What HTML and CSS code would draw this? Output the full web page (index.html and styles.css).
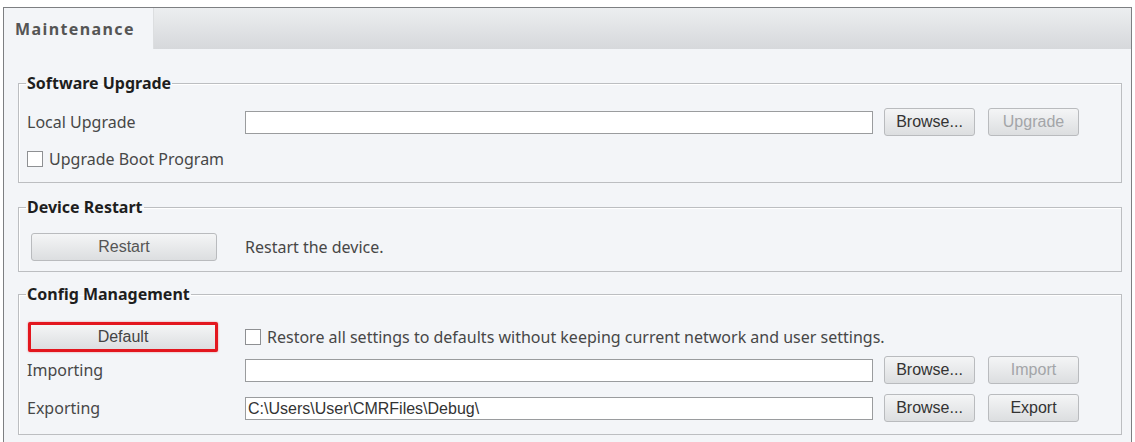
FILE: index.html
```html
<!DOCTYPE html>
<html>
<head>
<meta charset="utf-8">
<title>Maintenance</title>
<link rel="stylesheet" href="styles.css">
</head>
<body>
<div class="panel">
  <div class="tabbar">
    <div class="tab">Maintenance</div>
    <div class="tabfill"></div>
  </div>
  <div class="content">
    <fieldset class="group g1">
      <legend>Software Upgrade</legend>
      <div class="row r-upgrade">
        <span class="label">Local Upgrade</span>
        <span class="field"></span>
        <span class="btn browse">Browse...</span>
        <span class="btn small disabled">Upgrade</span>
      </div>
      <div class="row r-boot">
        <span class="check"></span>
        <span class="text">Upgrade Boot Program</span>
      </div>
    </fieldset>

    <fieldset class="group g2">
      <legend>Device Restart</legend>
      <div class="row r-restart">
        <span class="labelcol"><span class="btn wide">Restart</span></span>
        <span class="text">Restart the device.</span>
      </div>
    </fieldset>

    <fieldset class="group g3">
      <legend>Config Management</legend>
      <div class="row r-default">
        <span class="labelcol"><span class="highlight"><span class="btn wide inner">Default</span></span></span>
        <span class="check"></span>
        <span class="text">Restore all settings to defaults without keeping current network and user settings.</span>
      </div>
      <div class="row r-import">
        <span class="label">Importing</span>
        <span class="field"></span>
        <span class="btn browse">Browse...</span>
        <span class="btn small disabled">Import</span>
      </div>
      <div class="row r-export">
        <span class="label">Exporting</span>
        <span class="field">C:\Users\User\CMRFiles\Debug\</span>
        <span class="btn browse">Browse...</span>
        <span class="btn small">Export</span>
      </div>
    </fieldset>
  </div>
</div>
</body>
</html>
```
FILE: styles.css
```css
html, body {
  margin: 0;
  padding: 0;
  background: #ffffff;
  overflow: hidden;
}
body {
  font-family: "Noto Sans", "Open Sans", sans-serif;
  font-size: 16px;
  color: #474747;
}
.panel {
  margin: 7px 0 0 3px;
  width: 1127px;
  height: 434px;
  border: 1px solid #7d7f82;
  border-bottom: none;
  background: #f3f5f8;
}
.tabbar {
  display: flex;
  height: 41px;
}
.tab {
  width: 149px;
  padding-left: 11px;
  box-sizing: border-box;
  display: flex;
  align-items: center;
  font-weight: bold;
  font-size: 16px;
  color: #555555;
  background: #f3f5f8;
  letter-spacing: 1.4px;
}
.tabfill {
  flex: 1;
  background: linear-gradient(#eceef0, #d6d8db);
  border-left: 1px solid #dcdee0;
}
.content {
  padding: 25px 0 0 14px;
}
.group {
  width: 1094px;
  margin: 0;
  padding: 0 0 0 8px;
  border: 1px solid #bcbec1;
  box-shadow: inset 1px 1px 0 #ffffff;
}
.group legend {
  padding: 0 1px;
  margin-left: -1px;
  line-height: 18px;
  font-weight: bold;
  font-size: 16px;
  color: #1e1e1e;
}
.row {
  display: flex;
  align-items: center;
}
.label, .labelcol {
  width: 218px;
  flex: none;
}
.field {
  width: 628px;
  height: 23px;
  box-sizing: border-box;
  border: 1px solid #9a9c9e;
  background: #ffffff;
  font-family: "Liberation Sans", Arial, sans-serif;
  font-size: 16px;
  color: #333;
  line-height: 21px;
  padding-left: 2px;
  white-space: nowrap;
  overflow: hidden;
}
.btn {
  display: flex;
  align-items: center;
  justify-content: center;
  height: 28px;
  box-sizing: border-box;
  border: 1px solid #b9bbbe;
  border-radius: 3px;
  background: linear-gradient(#f4f5f6, #dcdee0);
  font-family: "Liberation Sans", Arial, sans-serif;
  font-size: 16px;
  color: #333333;
}
.btn.browse {
  width: 91px;
  margin-left: 11px;
}
.btn.small {
  width: 91px;
  margin-left: 13px;
}
.btn.disabled {
  color: #a3a5a8;
}
.btn.wide {
  width: 186px;
  margin-left: 4px;
  color: #555;
}
.highlight {
  display: flex;
  width: 190px;
  height: 30px;
  box-sizing: border-box;
  margin-left: 1px;
  border: 3px solid #e3161e;
  border-radius: 2px;
  box-shadow: 0 0 2px rgba(227, 22, 30, 0.5);
  background: #d9dbde;
}
.btn.inner {
  width: 184px;
  height: 24px;
  margin: 0;
  border: none;
  border-radius: 0;
  color: #444;
}
.check {
  width: 16px;
  height: 16px;
  box-sizing: border-box;
  border: 1px solid #8e9093;
  background: #ffffff;
  flex: none;
}
.text {
  margin-left: 6px;
}
.r-restart .text {
  margin-left: 0;
}
.g1 .r-upgrade {
  margin-top: 16px;
}
.g1 .r-boot {
  margin-top: 13px;
  height: 20px;
  padding-bottom: 13px;
}
.g2 {
  margin-top: 15px;
}
.r-restart {
  margin-top: 17px;
  padding-bottom: 10px;
}
.g3 {
  margin-top: 13px;
}
.r-default {
  margin-top: 19px;
}
.r-import {
  margin-top: 4px;
}
.r-export {
  margin-top: 10px;
  padding-bottom: 12px;
}
```
